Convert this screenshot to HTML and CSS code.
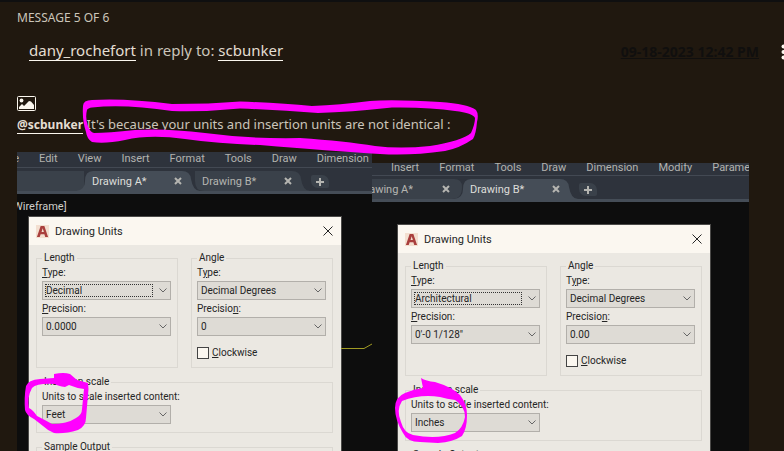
FILE: index.html
```html
<!DOCTYPE html>
<html lang="en">
<head>
<meta charset="utf-8">
<title>Message 5 of 6</title>
<link rel="stylesheet" href="styles.css">
</head>
<body>
<main class="message">
  <div class="count">MESSAGE 5 OF 6</div>
  <header class="head">
    <p class="byline"><a href="#author">dany_rochefort</a> in reply to: <a href="#parent">scbunker</a></p>
    <a class="date" href="#permalink">09-18-2023 12:42 PM</a>
    <button class="kebab" type="button" aria-label="Options">
      <svg width="5" height="17" viewBox="0 0 5 17"><circle cx="2.5" cy="2.5" r="2"/><circle cx="2.5" cy="8" r="2"/><circle cx="2.5" cy="13.5" r="2"/></svg>
    </button>
  </header>
  <svg class="photo" width="19" height="15" viewBox="0 0 19 15"><rect x="0.5" y="0.5" width="18" height="14" rx="1" fill="none" stroke="#fbf7ef"/><circle cx="4.5" cy="4.5" r="1.9" fill="#fbf7ef"/><path d="M2 13V11L5 8L7 10L12 5L14 5.500L17 9V13Z" fill="#fbf7ef"/></svg>
  <p class="text"><a class="mention" href="#scbunker">@scbunker</a> It's because your units and insertion units are not identical :</p>

  <div class="shots">
    <section class="shot first">
      <nav class="menubar"><span>e</span><span>Edit</span><span>View</span><span>Insert</span><span>Format</span><span>Tools</span><span>Draw</span><span>Dimension</span></nav>
      <div class="tabs">
        <div class="tab stub"></div>
        <div class="tab active"><svg class="shape" viewBox="0 0 124 20" preserveAspectRatio="none"><path d="M0 20Q9 19 9 10Q9 0 17 0H106Q114 0 115 8Q117 20 124 20Z"/></svg><span>Drawing A*</span><button type="button" aria-label="Close Drawing A"><svg viewBox="0 0 8 8"><path d="M1 1L7 7M7 1L1 7"/></svg></button></div>
        <div class="tab"><svg class="shape" viewBox="0 0 124 20" preserveAspectRatio="none"><path d="M9 0H106Q114 0 115 8Q117 20 124 20H18Q9 20 9 10Z"/></svg><span>Drawing B*</span><button type="button" aria-label="Close Drawing B"><svg viewBox="0 0 8 8"><path d="M1 1L7 7M7 1L1 7"/></svg></button></div>
        <button class="add" type="button" aria-label="New drawing"><svg viewBox="0 0 8 8"><path d="M4 0V8M0 4H8"/></svg></button>
      </div>
      <div class="canvas">
        <p class="view">Wireframe]</p>
        <svg class="wire" width="31" height="8" viewBox="0 0 31 8"><path d="M0 5.500H23L31 1"/></svg>
        <form class="dialog">
          <div class="title"><svg class="logo" viewBox="0 0 14 14"><rect width="14" height="14" fill="#f3dfd0"/><path d="M1 13L5 1H9L13 13H10L9 10H5L4 13ZM6 7.500H8.500L7.200 3.500Z" fill="#a93f3d" fill-rule="evenodd"/></svg><h2>Drawing Units</h2><button type="button" aria-label="Close"><svg viewBox="0 0 10 10"><path d="M0.500 0.500L9.500 9.500M9.500 0.500L0.500 9.500"/></svg></button></div>
          <div class="groups">
            <fieldset><legend>Length</legend>
              <label for="a1"><u>T</u>ype:</label>
              <div class="pick focus"><select id="a1"><option>Decimal</option></select><svg viewBox="0 0 8 5"><path d="M0.500 0.500L4 4L7.500 0.500"/></svg></div>
              <label for="a2"><u>P</u>recision:</label>
              <div class="pick"><select id="a2"><option>0.0000</option></select><svg viewBox="0 0 8 5"><path d="M0.500 0.500L4 4L7.500 0.500"/></svg></div>
            </fieldset>
            <fieldset><legend>Angle</legend>
              <label for="a3">T<u>y</u>pe:</label>
              <div class="pick"><select id="a3"><option>Decimal Degrees</option></select><svg viewBox="0 0 8 5"><path d="M0.500 0.500L4 4L7.500 0.500"/></svg></div>
              <label for="a4">Precisio<u>n</u>:</label>
              <div class="pick"><select id="a4"><option>0</option></select><svg viewBox="0 0 8 5"><path d="M0.500 0.500L4 4L7.500 0.500"/></svg></div>
              <label class="check"><input type="checkbox"><span><u>C</u>lockwise</span></label>
            </fieldset>
            <fieldset class="wide"><legend>Insertion scale</legend>
              <label for="a5">Units to scale inserted content:</label>
              <div class="pick"><select id="a5"><option>Feet</option></select><svg viewBox="0 0 8 5"><path d="M0.500 0.500L4 4L7.500 0.500"/></svg></div>
            </fieldset>
            <fieldset class="wide sample"><legend>Sample Output</legend></fieldset>
          </div>
        </form>
      </div>
    </section>

    <section class="shot second">
      <nav class="menubar"><span>Insert</span><span>Format</span><span>Tools</span><span>Draw</span><span>Dimension</span><span>Modify</span><span>Parametric</span></nav>
      <div class="tabs">
        <div class="tab cut"><svg class="shape" viewBox="0 0 124 20" preserveAspectRatio="none"><path d="M0 0H108Q116 0 116 8Q116 20 106 20H0Z"/></svg><span>Drawing A*</span><button type="button" aria-label="Close Drawing A"><svg viewBox="0 0 8 8"><path d="M1 1L7 7M7 1L1 7"/></svg></button></div>
        <div class="tab active"><svg class="shape" viewBox="0 0 124 20" preserveAspectRatio="none"><path d="M0 20Q9 19 9 10Q9 0 17 0H106Q114 0 115 8Q117 20 124 20Z"/></svg><span>Drawing B*</span><button type="button" aria-label="Close Drawing B"><svg viewBox="0 0 8 8"><path d="M1 1L7 7M7 1L1 7"/></svg></button></div>
        <button class="add" type="button" aria-label="New drawing"><svg viewBox="0 0 8 8"><path d="M4 0V8M0 4H8"/></svg></button>
      </div>
      <div class="canvas">
        <form class="dialog">
          <div class="title"><svg class="logo" viewBox="0 0 14 14"><rect width="14" height="14" fill="#f3dfd0"/><path d="M1 13L5 1H9L13 13H10L9 10H5L4 13ZM6 7.500H8.500L7.200 3.500Z" fill="#a93f3d" fill-rule="evenodd"/></svg><h2>Drawing Units</h2><button type="button" aria-label="Close"><svg viewBox="0 0 10 10"><path d="M0.500 0.500L9.500 9.500M9.500 0.500L0.500 9.500"/></svg></button></div>
          <div class="groups">
            <fieldset><legend>Length</legend>
              <label for="b1"><u>T</u>ype:</label>
              <div class="pick focus"><select id="b1"><option>Architectural</option></select><svg viewBox="0 0 8 5"><path d="M0.500 0.500L4 4L7.500 0.500"/></svg></div>
              <label for="b2"><u>P</u>recision:</label>
              <div class="pick"><select id="b2"><option>0'-0 1/128"</option></select><svg viewBox="0 0 8 5"><path d="M0.500 0.500L4 4L7.500 0.500"/></svg></div>
            </fieldset>
            <fieldset><legend>Angle</legend>
              <label for="b3">T<u>y</u>pe:</label>
              <div class="pick"><select id="b3"><option>Decimal Degrees</option></select><svg viewBox="0 0 8 5"><path d="M0.500 0.500L4 4L7.500 0.500"/></svg></div>
              <label for="b4">Precisio<u>n</u>:</label>
              <div class="pick"><select id="b4"><option>0.00</option></select><svg viewBox="0 0 8 5"><path d="M0.500 0.500L4 4L7.500 0.500"/></svg></div>
              <label class="check"><input type="checkbox"><span><u>C</u>lockwise</span></label>
            </fieldset>
            <fieldset class="wide"><legend>Insertion scale</legend>
              <label for="b5">Units to scale inserted content:</label>
              <div class="pick"><select id="b5"><option>Inches</option></select><svg viewBox="0 0 8 5"><path d="M0.500 0.500L4 4L7.500 0.500"/></svg></div>
            </fieldset>
            <fieldset class="wide sample"><legend>Sample Output</legend></fieldset>
          </div>
        </form>
      </div>
    </section>
  </div>

  <svg class="ink" width="784" height="451" viewBox="0 0 784 451" fill="#ff00ff" fill-rule="evenodd">
    <path d="M83 106Q83 100 92 100Q125 98 172 104Q210 104 240 101.500Q280 103 312 106Q340 105 370 101Q392 99 440 102Q468 104 476 110Q479 114 477 122Q476 134 473 139Q460 148 445 151Q410 156 380 154Q330 151 260 145Q220 144 185 139Q150 134 125 140Q105 144 92 142Q87 139 86 132Q82 120 83 106ZM87 110Q85 118 88 126Q90 132 94 133Q108 133 135 130Q165 128 205 133Q250 139 300 138Q345 141 375 146Q400 149 430 146Q462 141 471 133Q475 124 475 118Q473 113 455 111Q430 107 392 107.500Q350 112 318 113Q280 110 240 108.500Q205 112 172 111Q125 104 92 107.500Q88 108 87 110Z"/>
    <path d="M26 386Q28 380 40 379L54 378L54 374Q64 372 70 374L77 380L88 383Q89 389 88 395L86 418Q86 426 78 430Q65 434 54 433Q47 430 43 426Q38 422 34 419Q26 415 25 410Q24 397 26 386ZM32 388Q27 397 29 408Q33 410 37 416Q45 420 52 424Q67 424 76 418Q82 415 82 409L84 389Q76 388 69 385L65 387Q58 386 55 384Q37 383 32 388Z"/>
    <path d="M421 378Q426 381 435 382Q452 387 460 395Q467 404 467 415Q467 429 462 436Q453 442 438 443L420 442Q407 442 403 433Q395 420 395 408Q395 397 405 393Q414 389 423 388ZM402 401Q396 410 401 422Q404 433 413 435Q438 440 455 433Q463 428 465 417Q465 406 455 400Q447 399 440 397Q420 394 402 401Z"/>
  </svg>
</main>
</body>
</html>
```
FILE: styles.css
```css
* { box-sizing: border-box; }
body {
  margin: 0;
  min-height: 100vh;
  overflow: hidden;
  background: #20180f;
  color: #cbc5ba;
  font-family: "Noto Sans", "Open Sans", sans-serif;
}
a { color: inherit; }
p, h2 { margin: 0; }
button { padding: 0; border: 0; background: none; color: inherit; font: inherit; }
button svg { display: block; fill: none; stroke: currentColor; }

.message { position: relative; padding: 8px 0 0 17px; border-top: 2px solid #0f0f10; }
.count { font-size: 12px; line-height: 16px; }
.head { display: flex; align-items: center; margin-top: 12px; padding-left: 12px; height: 24px; }
.byline { flex: 1; font-size: 15px; line-height: 20px; }
.byline a, .mention { color: #e4ded2; text-decoration: none; border-bottom: 1px solid #fbf7ef; }
.date { margin-top: 4px; color: #100f0e; font-weight: 700; font-size: 14px; line-height: 20px; text-decoration: underline; }
.kebab { width: 25px; padding-left: 22px; margin-top: 4px; overflow: hidden; }
.kebab svg { fill: #fbf7ef; stroke: none; }
.photo { display: block; margin-top: 34px; }
.text { margin-top: 4px; font-size: 13px; line-height: 18px; white-space: nowrap; }
.mention { font-size: 12px; font-weight: 700; }

.shots { display: flex; align-items: flex-start; margin-top: 18px; font-family: Roboto, "Liberation Sans", sans-serif; }
.shot { position: relative; overflow: hidden; background: #0d0d0d; }
.first { flex: 0 0 355px; }
.second { flex: 0 0 377px; margin-top: 11px; }
.menubar { display: flex; gap: 20px; height: 16px; border-bottom: 1px solid #434953; background: #2e333c; color: #b2b2ae; font-size: 11px; line-height: 14px; white-space: nowrap; }
.first .menubar span:first-child { display: flex; justify-content: flex-end; width: 2px; overflow: hidden; }
.second .menubar { height: 13px; padding-left: 19px; line-height: 10px; }

.tabs { display: flex; height: 26px; padding-top: 3px; background: #2e333c; border-bottom: 3px solid #454d57; color: #b5b5b1; font-size: 11px; }
.tab { position: relative; display: flex; align-items: center; justify-content: space-between; flex: 0 0 110px; height: 20px; padding: 0 12px 0 8px; }
.tab span, .tab button { position: relative; }
.tab button { color: #b5b5b1; }
.tab button svg, .add svg { width: 8px; height: 8px; stroke-width: 2; }
.shape { position: absolute; top: 0; left: -8px; width: 124px; height: 20px; fill: #3a414a; }
.active { z-index: 1; color: #dededa; }
.active .shape { fill: #454d57; }
.stub { flex-basis: 67px; background: #3a414a; }
.cut { flex-basis: 90px; padding-left: 0; }
.cut .shape { left: -26px; }
.cut span { display: flex; justify-content: flex-end; width: 41px; overflow: hidden; white-space: nowrap; }
.add { width: 18px; height: 13px; margin: 4px 0 0 7px; padding-left: 5px; border-radius: 2px 7px 2px 7px; background: #3a414a; }

.canvas { position: relative; padding: 22px 0 0 11px; }
.view { position: absolute; top: 6px; left: -4px; color: #cfcfca; font-size: 11px; line-height: 14px; }
.wire { position: absolute; top: 149px; left: 324px; fill: none; stroke: #a09a23; }
.second .canvas { padding-left: 25px; }
.dialog { width: 314px; margin: 0; border: 1px solid #4b4a48; border-bottom: 0; background: #ebe8e2; color: #252525; }
.title { display: flex; align-items: center; height: 28px; padding: 0 8px 0 7px; background: #fbf7f0; }
.logo { width: 13px; height: 13px; }
.title h2 { flex: 1; margin-left: 6px; font-size: 11px; font-weight: 400; }
.title button svg { width: 10px; height: 10px; }
.groups { display: grid; grid-template-columns: 1fr 1fr; gap: 7px 13px; padding: 6px 8px 8px 7px; font-size: 10px; }
fieldset { min-width: 0; margin: 0; padding: 0 6px 8px 5px; border: 1px solid #dbd8d2; }
.wide { grid-column: 1 / -1; }
.sample { min-height: 50px; }
legend { margin-left: 0; padding: 0 2px; line-height: 14px; }
label { display: block; line-height: 16px; }
.pick { position: relative; width: 129px; max-width: 100%; margin-bottom: 1px; }
.wide .pick { margin-bottom: 0; }
.pick select { display: block; width: 100%; height: 19px; padding: 0 20px 0 3px; border: 1px solid #b2afaa; border-radius: 0; appearance: none; background: #dedbd5; color: #252525; font-family: inherit; font-size: 10px; }
.pick svg { position: absolute; top: 7px; right: 4px; width: 8px; height: 5px; fill: none; stroke: #666; pointer-events: none; }
.focus::after { content: ""; position: absolute; inset: 3px 18px 3px 3px; border: 1px dotted #333; pointer-events: none; }
.check { display: flex; align-items: center; gap: 3px; height: 12px; margin-top: 11px; }
.check input { appearance: none; width: 12px; height: 12px; margin: 0; border: 1px solid #444; background: #fbf7f0; }
.ink { position: absolute; top: -2px; left: 0; pointer-events: none; }
```
